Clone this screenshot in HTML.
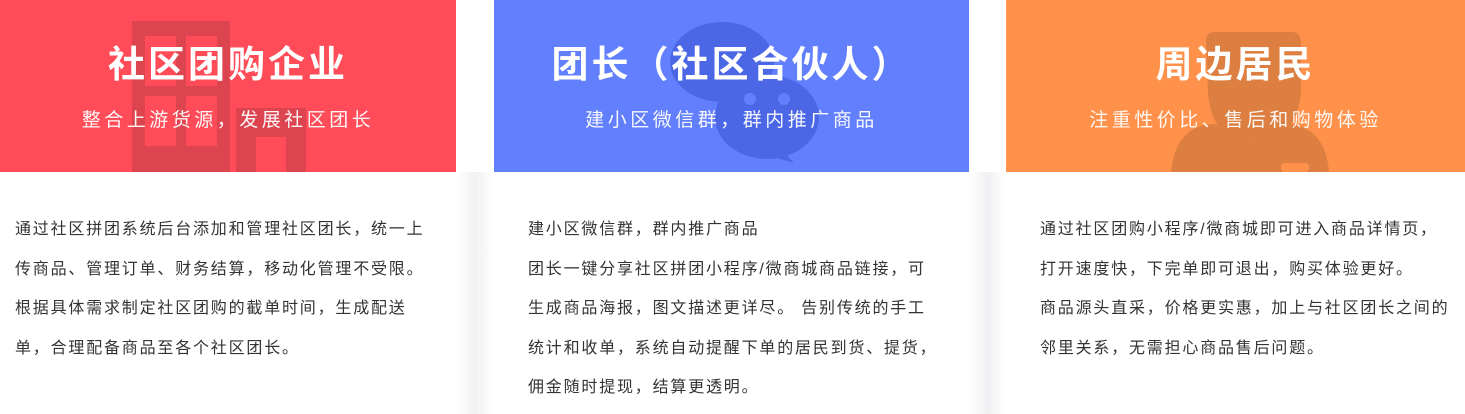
<!DOCTYPE html>
<html><head><meta charset="utf-8"><style>
*{margin:0;padding:0;box-sizing:border-box}
body{width:1465px;height:414px;background:#fff;overflow:hidden;font-family:"Liberation Sans","Noto Sans CJK SC",sans-serif;position:relative}
.gap{position:absolute;top:172px;height:242px;background:linear-gradient(90deg,#fff,#f1f1f3 50%,#fff)}
.card{position:absolute;top:0;height:414px;background:#fff}
.hd{position:absolute;left:0;top:0;right:0;height:172px;overflow:hidden}
.hd svg{position:absolute;left:0;top:0}
.t{position:absolute;left:0;right:0;top:40px;text-align:center;color:#fff;font-size:37px;font-weight:bold;line-height:50px;letter-spacing:3px}
.s{position:absolute;left:0;right:0;top:107px;text-align:center;color:#fff;font-size:19px;line-height:28px;opacity:.95;letter-spacing:3.5px}
.bd{position:absolute;top:210px;font-size:16px;line-height:39.5px;color:#333;letter-spacing:1.8px;white-space:nowrap}
</style></head><body>
<div class="gap" style="left:456px;width:38px"></div>
<div class="gap" style="left:969px;width:37px"></div>

<div class="card" style="left:0;width:456px">
 <div class="hd" style="background:#ff4c58">
  <svg width="456" height="172"><g fill="#dc4450">
   <path d="M132 21h98v151h-98zM236 108h70v64h-70z"/></g>
   <g fill="#ff4c58"><rect x="145" y="36" width="31" height="50"/><rect x="186" y="36" width="31" height="50"/><rect x="145" y="96" width="31" height="50"/><rect x="186" y="96" width="31" height="50"/><rect x="256" y="137" width="30" height="35"/></g></svg>
  <div class="t">社区团购企业</div><div class="s">整合上游货源，发展社区团长</div>
 </div>
 <div class="bd" style="left:15px">通过社区拼团系统后台添加和管理社区团长，统一上<br>传商品、管理订单、财务结算，移动化管理不受限。<br>根据具体需求制定社区团购的截单时间，生成配送<br>单，合理配备商品至各个社区团长。</div>
</div>

<div class="card" style="left:494px;width:475px">
 <div class="hd" style="background:#6280fe">
  <svg width="475" height="172"><g fill="#4b67e6">
   <ellipse cx="228" cy="62" rx="52" ry="40"/>
   <ellipse cx="273" cy="117" rx="52" ry="42"/><path d="M288 150l12 13-24-7z"/></g>
   <g fill="#6280fe"><circle cx="256" cy="99" r="6"/><circle cx="290" cy="99" r="6"/></g></svg>
  <div class="t">团长（社区合伙人）</div><div class="s">建小区微信群，群内推广商品</div>
 </div>
 <div class="bd" style="left:34px">建小区微信群，群内推广商品<br>团长一键分享社区拼团小程序/微商城商品链接，可<br>生成商品海报，图文描述更详尽。 告别传统的手工<br>统计和收单，系统自动提醒下单的居民到货、提货，<br>佣金随时提现，结算更透明。</div>
</div>

<div class="card" style="left:1006px;width:459px">
 <div class="hd" style="background:#ff914a">
  <svg width="459" height="172"><g fill="#dc7f40">
   <path d="M200 40q0-8 10-8h75q10 0 10 10v50q-5 50-48 52q-40-2-45-50z"/>
   <path d="M165 172q5-48 45-48q15 18 35 20q22-2 32-20q42 0 46 48z"/></g>
   <rect x="275" y="163" width="28" height="9" rx="4" fill="#ff914a"/></svg>
  <div class="t">周边居民</div><div class="s">注重性价比、售后和购物体验</div>
 </div>
 <div class="bd" style="left:34px">通过社区团购小程序/微商城即可进入商品详情页，<br>打开速度快，下完单即可退出，购买体验更好。<br>商品源头直采，价格更实惠，加上与社区团长之间的<br>邻里关系，无需担心商品售后问题。</div>
</div>
</body></html>
